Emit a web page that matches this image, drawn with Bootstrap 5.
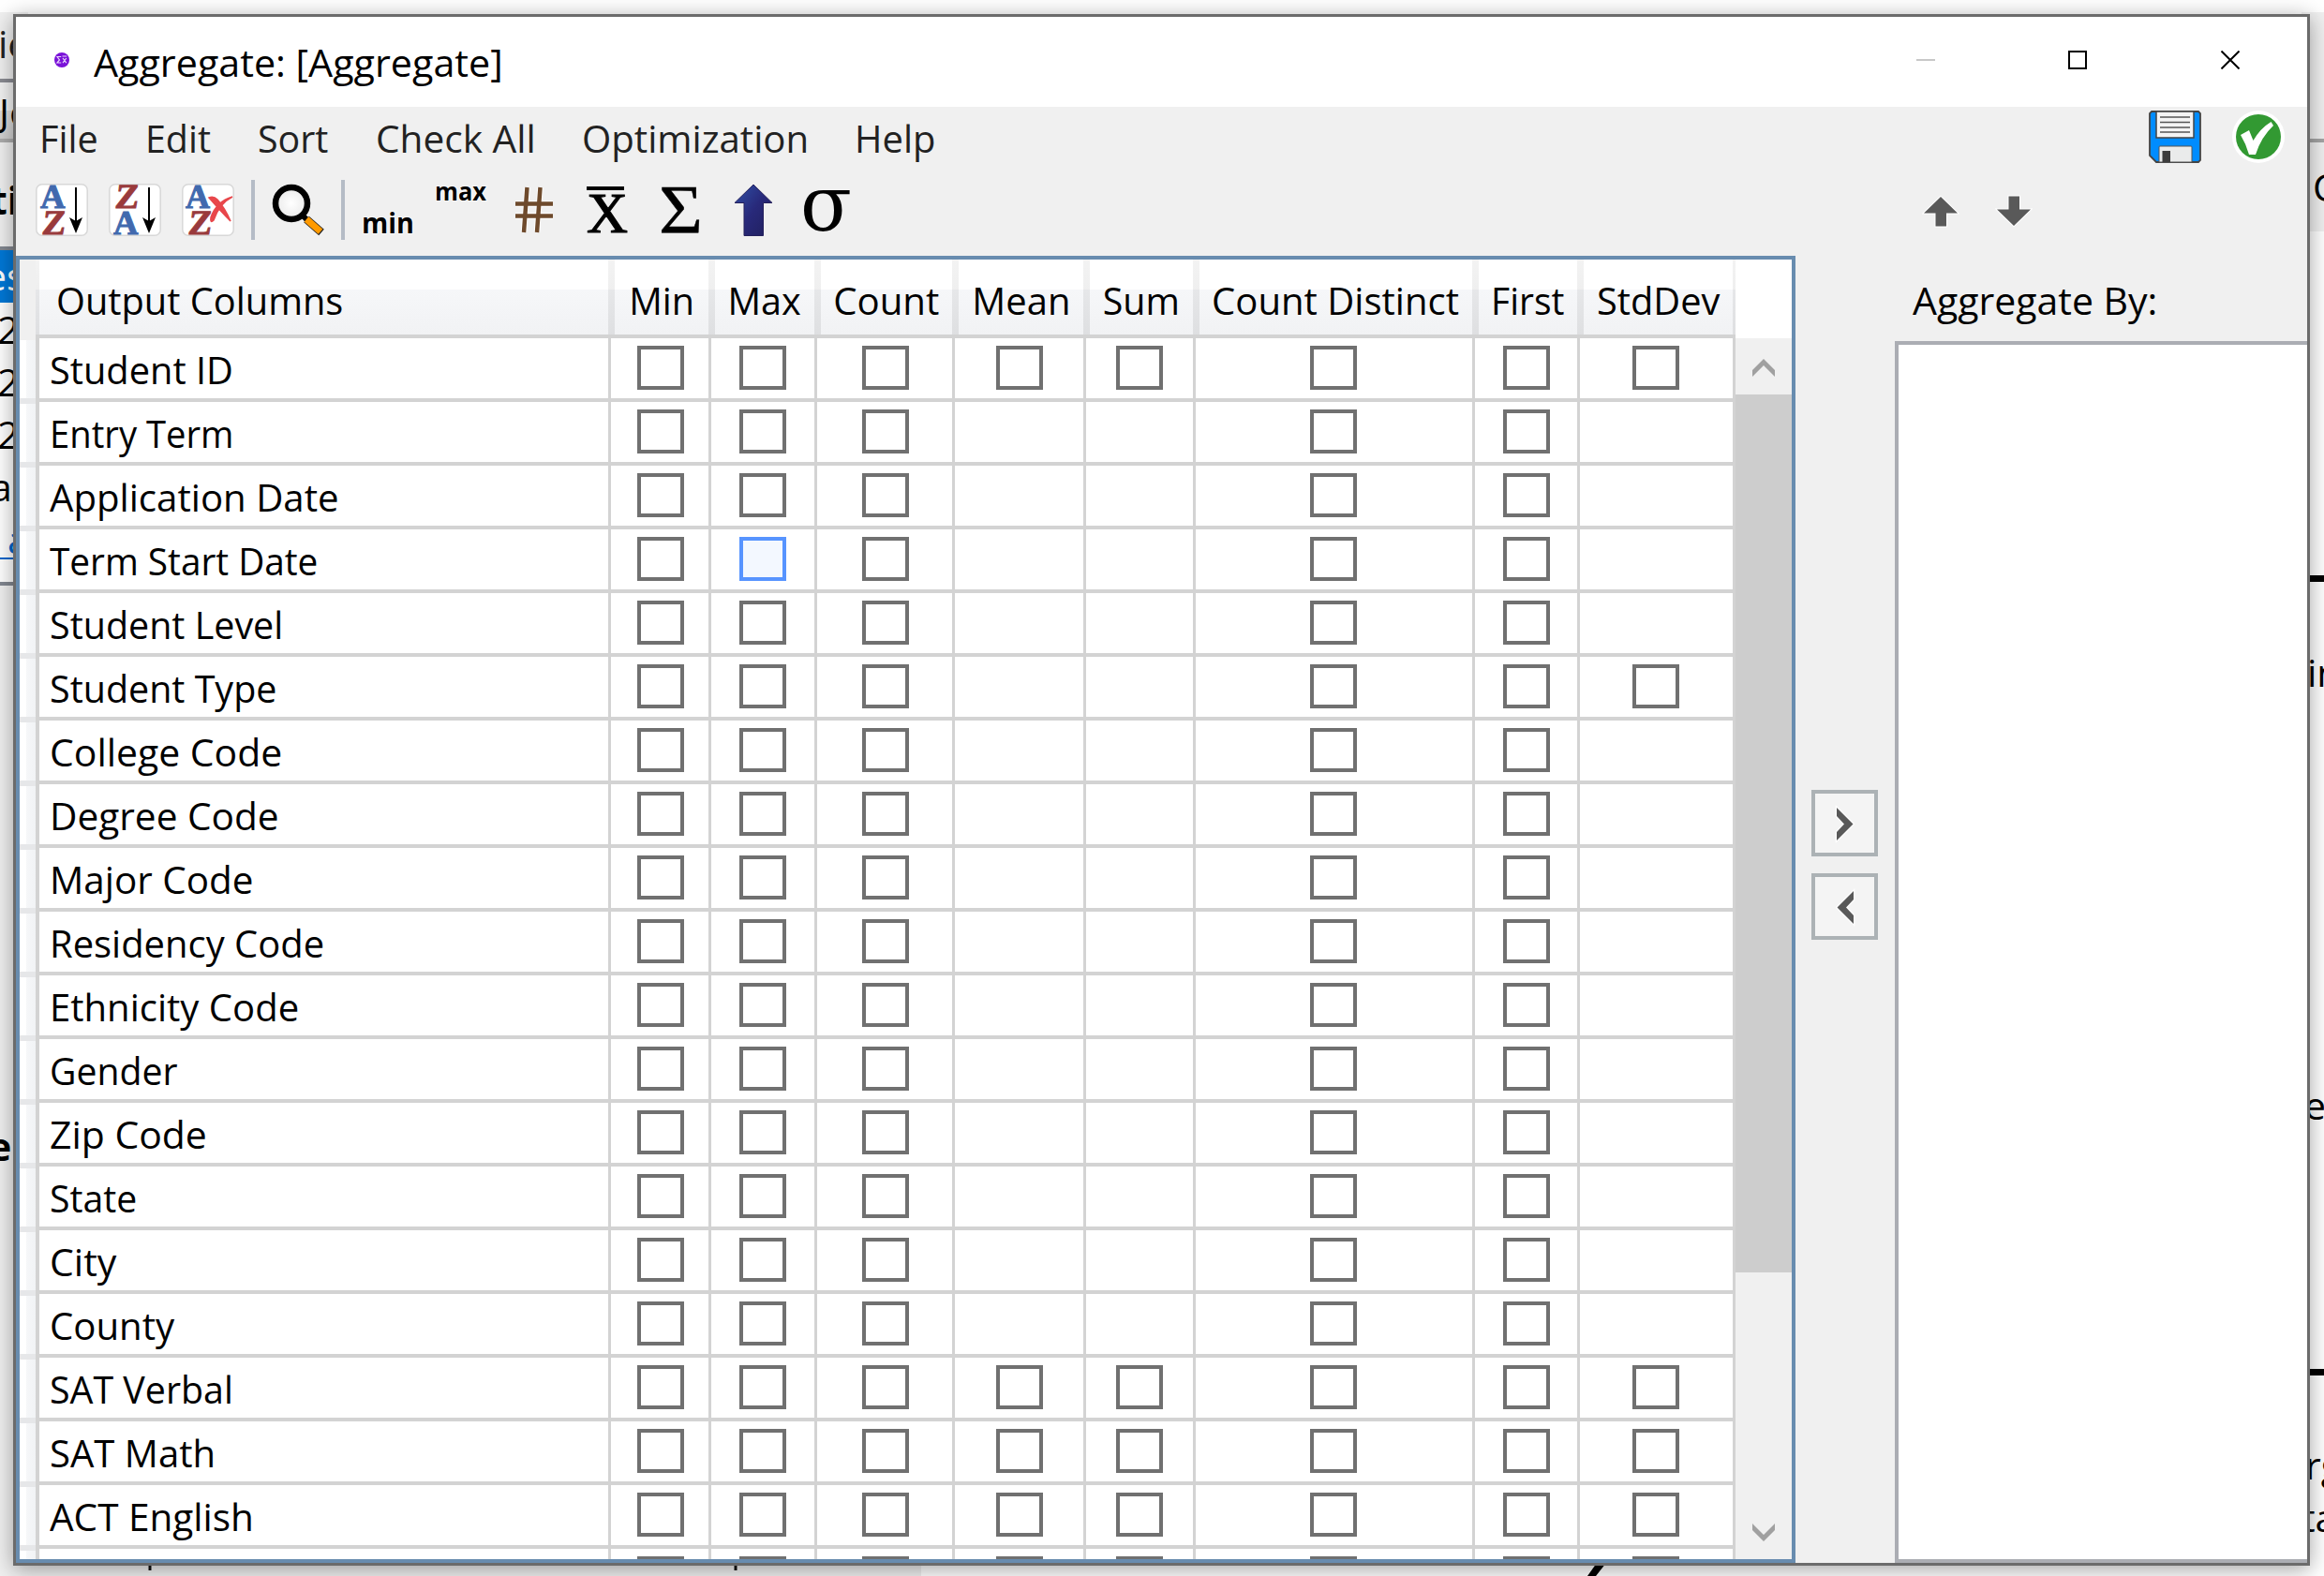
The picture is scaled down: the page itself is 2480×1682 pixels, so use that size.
<!DOCTYPE html>
<html lang="en">
<head>
<meta charset="utf-8">
<title>Aggregate</title>
<link href="https://cdn.jsdelivr.net/npm/bootstrap@5.3.0/dist/css/bootstrap.min.css" rel="stylesheet">
<script src="https://cdn.jsdelivr.net/npm/bootstrap@5.3.0/dist/js/bootstrap.bundle.min.js"></script>
<style>
  body { width: 2480px; height: 1682px; overflow: hidden; background: #fff; color: #000; font: 41px/56px "Open Sans", "Noto Sans", sans-serif; }
  .tx { display: inline-block; white-space: nowrap; transform: scaleX(.97); transform-origin: left center; }
  .desk { height: 1682px; background: #fff; }
  .desk .strip { width: 30px; white-space: nowrap; }
  .strip-right { width: 24px; white-space: nowrap; }
  .face { background: #f0f0f0; }
  .desk-foot { height: 40px; }
  .win { position: absolute; left: 14px; top: 15px; width: 2451px; height: 1656px; border: 3px solid #6b6b6b; background: #f0f0f0; box-shadow: 0 4px 22px rgba(0,0,0,.36); overflow: hidden; }
  .titlebar { height: 96px; background: #fff; padding: 0 72px 0 41px; }
  .menubar { height: 159px; }
  .menus { height: 82px; color: #222; padding: 5px 0 0 25px; }
  .tools { height: 56px; padding-left: 21px; gap: 22px; }
  .toolsep { width: 4px; height: 64px; background: #b5bcc6; }
  .grid-panel { width: 1899px; height: 1395px; border: 4px solid #688caf; background: #fff; }
  .rowhead { width: 17px; }
  .rowhead .corner { height: 86px; background: #f0f0f0; }
  .rowhead .rh { height: 68px; background: linear-gradient(90deg,#fff 0,#fff 7px,#f6f7f9 7px,#f1f3f5 100%); border-bottom: 6px solid #e6e7e9; }
  .gcols { display: grid; grid-template-columns: 610px 107px 113px 147px 140px 117px 298px 112px 166px; }
  .ghead { height: 84px; border-bottom: 4px solid #d3d3d3; padding-left: 4px; background: linear-gradient(#fff 0,#fff 32px,#f6f7f9 32px,#f1f2f4 100%); }
  .ghead > div { height: 80px; display: flex; align-items: center; justify-content: center; padding-top: 5px; border-right: 3px solid; border-left: 4px solid; border-image: linear-gradient(#f3f3f3 0,#efefef 32px,#e6e7e9 32px,#dedfe1 100%) 1; }
  .ghead > div:first-child { justify-content: start; padding-left: 18px; margin-left: -4px; }
  .ghead > div:not(:first-child) .tx { transform-origin: center; }
  .gbody { height: 1303px; overflow: hidden; border-left: 4px solid #d3d3d3; }
  .grow { height: 68px; border-bottom: 4px solid #d3d3d3; }
  .grow > div { border-right: 3px solid #d3d3d3; height: 64px; display: flex; justify-content: center; padding-top: 8px; }
  .grow > div:first-child { justify-content: start; padding: 5px 0 0 11px; }
  .grow > div:nth-child(2), .grow > div:nth-child(4) { padding-left: 2px; }
  .grow > div:nth-child(7), .grow > div:nth-child(9) { padding-right: 2px; }
  .cb { width: 50px; height: 47px; border: 4px solid #707070; background: #fff; }
  .cb.hot { border-color: #5794ff; background: #f3f8ff; }
  .sbar { width: 60px; padding-top: 84px; }
  .sbar .sbtn { height: 60px; }
  .sthumb { height: 937px; background: #cdcdcd; }
  .mover { width: 106px; padding-top: 570px; padding-left: 17px; }
  .mbtn { width: 71px; height: 71px; border: 4px solid #acb2b5; background: #f4f4f4; margin-bottom: 18px; }
  .by-list { border: 4px solid #abadb3; border-right: 0; background: #fff; height: 1304px; }
  .by-label { height: 91px; padding: 19px 0 0 19px; }
  svg { display: block; flex: none; }
</style>
</head>
<body>
<div class="desk d-flex justify-content-between position-relative">
  <div class="strip d-flex flex-column">
    <div style="height:13px"></div>
    <div class="face" style="height:71px;color:#222;line-height:66px"><span style="margin-left:-2px">ie</span></div>
    <div style="height:68px;border-top:4px solid #8a8b92;border-bottom:4px solid #acacac;background:linear-gradient(#f2f2f2 50%,#dedede 50%,#d0d0d0);line-height:62px"><span style="margin-left:-1px">Jo</span></div>
    <div class="face fw-bold" style="height:111px;line-height:122px"><span style="margin-left:-10px">ti</span></div>
    <div style="height:60px;border-top:4px solid #828790;background:#0078d7;color:#fff;line-height:54px"><span style="margin-left:-16px">es</span></div>
    <div style="line-height:56px;margin-left:-3px">2<br>2<br>2<br><span style="margin-left:-7px">ar</span></div>
    <div style="height:78px;border-bottom:4px solid #828790;color:#0066cc;line-height:56px"><div style="border-bottom:2px solid #0066cc;height:50px;padding-left:8px">a</div></div>
    <div class="face fw-bold flex-fill" style="padding-top:570px"><span style="margin-left:-12px">e</span></div>
  </div>
  <div class="flex-fill d-flex flex-column justify-content-end">
    <div class="desk-foot d-flex">
      <div class="face" style="width:953px;padding-left:128px"><svg width="640" height="40"><path d="M2 0V34M627 0V34" stroke="#111" stroke-width="3"/></svg></div>
      <svg width="740" height="40" style="margin-left:700px"><path d="M11 40L21 26H31L20 40Z"/></svg>
    </div>
  </div>
  <div class="strip-right d-flex flex-column">
    <div style="height:13px"></div>
    <div class="face" style="height:139px;border-bottom:4px solid #a5a5a5"></div>
    <div class="face" style="height:95px;line-height:94px;padding-left:12px">C</div>
    <div style="height:374px;border-bottom:7px solid #000"></div>
    <div style="height:847px;border-bottom:7px solid #000;padding:68px 0 0 6px">in<div style="padding-top:406px;margin-left:-3px">e</div></div>
    <div style="padding:67px 0 0 4px">rg<div style="margin-left:-4px">ta</div></div>
  </div>
</div>

<div class="win d-flex flex-column">
  <div class="titlebar d-flex align-items-center flex-shrink-0">
    <svg width="16" height="16" style="margin-top:-4px"><circle cx="8" cy="8" r="8" fill="#7a12d8"/><path d="M7.200 4.500H3L5.500 8L3 11H7.200M8.500 4H13.200M9 6L12.800 11.200M12.800 6L9 11.200" stroke="#e8d8fa" stroke-width="1.200" fill="none"/></svg>
    <div class="tx" data-k="1.006" style="margin-left:26px">Aggregate: [Aggregate]</div>
    <div class="ms-auto d-flex" style="margin-top:-4px">
      <svg width="20" height="20" style="margin-right:142px"><path d="M0 10H20" stroke="#c8c8c8" stroke-width="2"/></svg>
      <svg width="20" height="20" style="margin-right:143px"><path d="M1 1H19V19H1Z" stroke="#000" stroke-width="2" fill="none"/></svg>
      <svg width="20" height="20"><path d="M.5 .5L19.500 19.500M19.500 .5L.5 19.500" stroke="#000" stroke-width="2"/></svg>
    </div>
  </div>

  <div class="menubar flex-shrink-0 d-flex">
    <div style="width:1997px">
      <div class="menus d-flex align-items-start">
        <div style="width:113px"><span class="tx" data-k=".965">File</span></div>
        <div style="width:120px"><span class="tx" data-k=".96">Edit</span></div>
        <div style="width:126px"><span class="tx" data-k=".96">Sort</span></div>
        <div style="width:220px"><span class="tx" data-k=".99">Check All</span></div>
        <div style="width:291px"><span class="tx" data-k=".98">Optimization</span></div>
        <div><span class="tx" data-k=".975">Help</span></div>
      </div>
      <div class="tools d-flex align-items-center">
        <svg width="56" height="56" font-family="Liberation Serif" font-weight="bold"><rect x=".8" y=".8" width="54.400" height="54.400" rx="6" fill="#fff" stroke="#d8d8d8" stroke-width="1.500"/><text transform="translate(5 26) scale(1.020 1)" font-size="36" fill="#4169ae" stroke="#4169ae">A</text><text transform="translate(6 54) scale(1.020 1) skewX(-6)" font-size="37" fill="#993a3c" stroke="#993a3c">Z</text><path d="M43 4V40" stroke="#000" stroke-width="2"/><path d="M36 36L43 40L50 36L43 53Z"/></svg>
        <svg width="56" height="56" font-family="Liberation Serif" font-weight="bold"><rect x=".8" y=".8" width="54.400" height="54.400" rx="6" fill="#fff" stroke="#d8d8d8" stroke-width="1.500"/><text transform="translate(6 26) scale(1.020 1) skewX(-6)" font-size="37" fill="#993a3c" stroke="#993a3c">Z</text><text transform="translate(5 54) scale(1.020 1)" font-size="36" fill="#4169ae" stroke="#4169ae">A</text><path d="M43 4V40" stroke="#000" stroke-width="2"/><path d="M36 36L43 40L50 36L43 53Z"/></svg>
        <svg width="56" height="56" font-family="Liberation Serif" font-weight="bold"><rect x=".8" y=".8" width="54.400" height="54.400" rx="6" fill="#fff" stroke="#d8d8d8" stroke-width="1.500"/><text transform="translate(4 26) scale(1 1)" font-size="36" fill="#4169ae" stroke="#4169ae">A</text><text transform="translate(6 54) scale(1.020 1) skewX(-6)" font-size="37" fill="#993a3c" stroke="#993a3c">Z</text><path d="M29 15Q34 13 38 17Q46 26 52 40Q44 32 29 15ZM54 14Q40 21 34 39Q30 43 31 36Q37 19 54 14Z" fill="#e8474b" stroke="#e8474b" stroke-width="1.500"/></svg>
        <div class="toolsep" style="margin-left:-4px"></div>
        <svg width="56" height="56" style="margin-left:-4px"><defs><radialGradient id="lens"><stop offset="0" stop-color="#fff"/><stop offset="1" stop-color="#eaeaea"/></radialGradient></defs><circle cx="21" cy="21" r="17" fill="url(#lens)" stroke="#000" stroke-width="6.500"/><path d="M33 34L38 39" stroke="#000" stroke-width="6"/><path d="M37 38L53 52" stroke="#222" stroke-width="8.500"/><path d="M37 38L52 51.200" stroke="#ff9a00" stroke-width="7"/></svg>
        <div class="toolsep" style="margin-left:-4px"></div>
        <svg width="56" height="56" style="margin-left:-4px;overflow:visible" font-family="Open Sans" font-weight="bold" font-size="31"><text x="0" y="53" textLength="56" lengthAdjust="spacingAndGlyphs" stroke="#fff" stroke-width="1.500" paint-order="stroke">min</text></svg>
        <svg width="56" height="56" style="overflow:visible" font-family="Open Sans" font-weight="bold" font-size="26"><text x="0" y="18" textLength="55" lengthAdjust="spacingAndGlyphs" stroke="#fff" stroke-width="1.500" paint-order="stroke">max</text></svg>
        <svg width="56" height="56" fill="none"><path d="M20.500 4L17 52M34.500 4L31 52M8 21.500H48M8 34.500H48" stroke="#fff" stroke-width="6.500"/><path d="M20.500 4L17 52M34.500 4L31 52M8 21.500H48M8 34.500H48" stroke="#6e4a2c" stroke-width="4.500"/></svg>
        <svg width="56" height="56" font-family="Liberation Serif"><text x="6" y="52" font-size="62" textLength="44" lengthAdjust="spacingAndGlyphs" stroke="#000" stroke-width="1.200">X</text><path d="M6 5H46" stroke="#000" stroke-width="4"/></svg>
        <svg width="56" height="56" font-family="Liberation Serif"><text x="5" y="52.500" font-size="74" textLength="47" lengthAdjust="spacingAndGlyphs" stroke="#000" stroke-width=".4">Σ</text></svg>
        <svg width="56" height="56"><defs><linearGradient id="up" x2="1" y2="1"><stop offset="0" stop-color="#2f50a6"/><stop offset=".5" stop-color="#28297a"/><stop offset="1" stop-color="#201f5c"/></linearGradient></defs><path d="M28 1L48 20.500H38.500V55.500H18V20.500H8Z" fill="url(#up)" stroke="#24205c"/></svg>
        <svg width="56" height="56" style="overflow:visible" font-family="DejaVu Serif"><text x="0" y="50" font-size="83" textLength="55" lengthAdjust="spacingAndGlyphs">σ</text></svg>
      </div>
    </div>
    <div>
      <div class="d-flex" style="padding:4px 0 0 279px;gap:33px">
        <svg width="56" height="56"><path d="M3 1H53L55 3V53L53 55H8L1 48V3Z" fill="#008cff" stroke="#444" stroke-width="1.800"/><path d="M8 1H48V29H8Z" fill="#f4f4f4" stroke="#444" stroke-width="1.500"/><path d="M12 7H44M12 12.500H44M12 18H44M12 23H44" stroke="#555" stroke-width="1.700"/><path d="M11 55V39Q11 38 12 38H45Q46 38 46 39V55Z" fill="#eaebeb" stroke="#555"/><path d="M14.500 43H23V55H14.500Z" fill="#3c3c3c"/></svg>
        <svg width="56" height="56"><circle cx="28" cy="28" r="28" fill="#fff"/><circle cx="28" cy="28" r="24" fill="#329932"/><path d="M9 26L18 21L22.500 32Q30 19 41.500 12L44 16Q31 28 25 47H18Q15 36 9 26Z" fill="#fff"/></svg>
      </div>
      <div class="d-flex" style="padding:34px 0 0 37px;gap:38px">
        <svg width="40" height="36" viewBox="-1 -1 40 36"><path d="M19 1L37 18.500H25V32.500H13.500V18.500H1Z" fill="#595959" stroke="#fff" stroke-width="2" paint-order="stroke"/></svg>
        <svg width="40" height="36" viewBox="-1 -1 40 36"><path d="M19 32L37 14.500H25V.5H13.500V14.500H1Z" fill="#595959" stroke="#fff" stroke-width="2" paint-order="stroke"/></svg>
      </div>
    </div>
  </div>

  <div class="d-flex flex-shrink-0">
    <div class="grid-panel d-flex">
      <div class="rowhead overflow-hidden" id="heads"><div class="corner"></div></div>
      <div>
        <div class="ghead gcols">
          <div><span class="tx" data-k=".97">Output Columns</span></div><div><span class="tx" data-k=".965">Min</span></div><div><span class="tx" data-k=".965">Max</span></div><div><span class="tx" data-k=".98">Count</span></div><div><span class="tx" data-k=".975">Mean</span></div><div><span class="tx" data-k=".96">Sum</span></div><div><span class="tx" data-k=".977">Count Distinct</span></div><div><span class="tx" data-k=".95">First</span></div><div><span class="tx" data-k=".97">StdDev</span></div>
        </div>
        <div class="gbody" id="rows"></div>
      </div>
      <div class="sbar">
        <div class="sbtn face"><svg width="60" height="60"><path d="M18 34L30 22L42 34V41L30 29L18 41Z" fill="#a0a0a0"/></svg></div>
        <div class="sthumb"></div>
        <div class="face" style="height:246px"></div>
        <div class="sbtn face"><svg width="60" height="60"><path d="M18 22L30 34L42 22V29L30 41L18 29Z" fill="#a0a0a0"/></svg></div>
      </div>
    </div>
    <div class="mover">
      <div class="mbtn"><svg width="63" height="63"><path d="M23 15L40.500 32.500L23 50V41L31 32.500L23 24Z" fill="#595959" stroke="#fff" stroke-width="2.500" paint-order="stroke"/></svg></div>
      <div class="mbtn"><svg width="63" height="63"><path d="M41 15L23.500 32.500L41 50V41L33 32.500L41 24Z" fill="#595959" stroke="#fff" stroke-width="2.500" paint-order="stroke"/></svg></div>
    </div>
    <div class="flex-fill">
      <div class="by-label"><span class="tx" data-k="1">Aggregate By:</span></div>
      <div class="by-list"></div>
    </div>
  </div>
</div>

<script>
  // each row: label, horizontal glyph scale
  const items = [["Student ID",.97],["Entry Term",.932],["Application Date",.98],["Term Start Date",.945],["Student Level",.962],["Student Type",.962],["College Code",.998],["Degree Code",.99],["Major Code",.985],["Residency Code",.974],["Ethnicity Code",.977],["Gender",.955],["Zip Code",.998],["State",.955],["City",1],["County",.98],["SAT Verbal",.96],["SAT Math",.978],["ACT English",.988],["",1]];
  const numeric = [0, 16, 17, 18, 19];
  // column order: Min, Max, Count, Mean, Sum, Count Distinct, First, StdDev
  document.getElementById("rows").innerHTML = items.map(([n, k], r) => {
    const num = numeric.includes(r);
    const on = [1, 1, 1, num, num, 1, 1, num || r === 5];
    return `<div class="grow gcols"><div><span class="tx" data-k="${k}">${n}</span></div>` +
      on.map((v, c) => `<div>${v ? `<span class="cb${r === 3 && c === 1 ? " hot" : ""}"></span>` : ""}</div>`).join("") + "</div>";
  }).join("");
  document.getElementById("heads").insertAdjacentHTML("beforeend", items.map(() => '<div class="rh"></div>').join(""));
  document.querySelectorAll("[data-k]").forEach(e => e.style.transform = `scaleX(${e.dataset.k})`);
</script>
</body>
</html>
